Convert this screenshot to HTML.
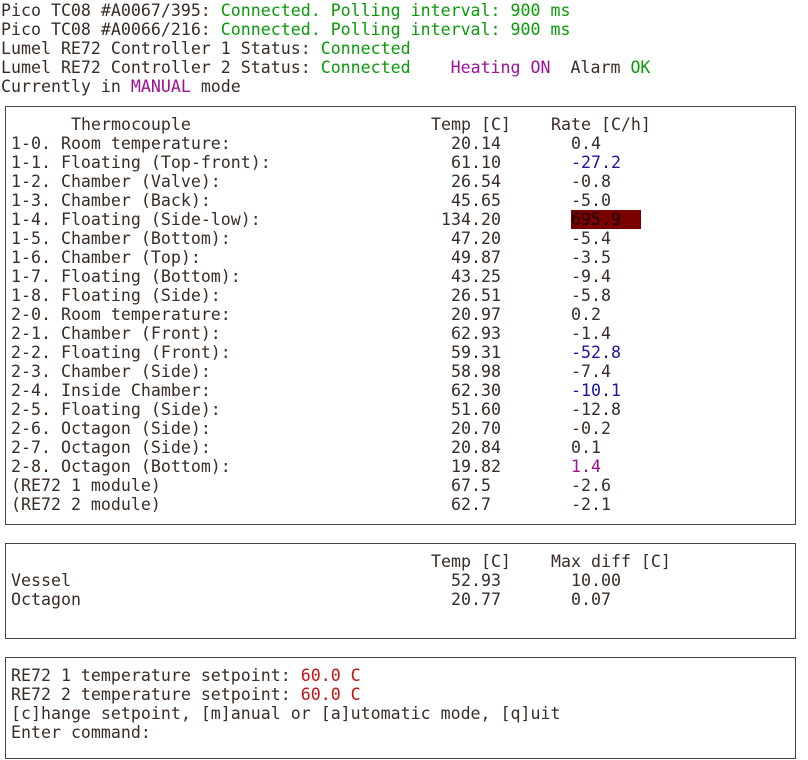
<!DOCTYPE html>
<html><head><meta charset="utf-8"><style>
html,body{margin:0;padding:0;background:#fff;width:808px;height:760px;overflow:hidden}
body{position:relative;font-family:"DejaVu Sans Mono","Liberation Mono",monospace;font-size:16.6px;color:#3a2c26}
.l{position:absolute;left:0;height:19px;line-height:19px;white-space:pre;margin-top:1px}
.l span{position:absolute;white-space:pre}
.a{left:11px}.t{left:431px;width:70px;text-align:right}.r{left:571px}
.g{color:#0a9a0a}.m{color:#a0109a}.b{color:#1a14a0}.red{color:#c81010}
.box{position:absolute;left:5px;width:789px;border:1px solid #444}
.hl{background:#7a0000;color:#1a0000;padding-right:20px}
</style></head><body>
<div class="l" style="top:0;left:1px">Pico TC08 #A0067/395: <span style="position:static" class="g">Connected. Polling interval: 900 ms</span></div>
<div class="l" style="top:19px;left:1px">Pico TC08 #A0066/216: <span style="position:static" class="g">Connected. Polling interval: 900 ms</span></div>
<div class="l" style="top:38px;left:1px">Lumel RE72 Controller 1 Status: <span style="position:static" class="g">Connected</span></div>
<div class="l" style="top:57px;left:1px">Lumel RE72 Controller 2 Status: <span style="position:static" class="g">Connected</span>    <span style="position:static" class="m">Heating ON</span>  Alarm <span style="position:static" class="g">OK</span></div>
<div class="l" style="top:76px;left:1px">Currently in <span style="position:static" class="m">MANUAL</span> mode</div>

<div class="box" style="top:106px;height:417px"></div>
<div class="box" style="top:543px;height:94px"></div>
<div class="box" style="top:657px;height:100px"></div>

<div class="l" style="top:114px"><span style="left:71px">Thermocouple</span><span style="left:431px">Temp [C]</span><span style="left:551px">Rate [C/h]</span></div>
<div class="l" style="top:133px"><span class="a">1-0. Room temperature:</span><span class="t">20.14</span><span class="r">0.4</span></div>
<div class="l" style="top:152px"><span class="a">1-1. Floating (Top-front):</span><span class="t">61.10</span><span class="r b">-27.2</span></div>
<div class="l" style="top:171px"><span class="a">1-2. Chamber (Valve):</span><span class="t">26.54</span><span class="r">-0.8</span></div>
<div class="l" style="top:190px"><span class="a">1-3. Chamber (Back):</span><span class="t">45.65</span><span class="r">-5.0</span></div>
<div class="l" style="top:209px"><span class="a">1-4. Floating (Side-low):</span><span class="t">134.20</span><span class="r hl">695.9</span></div>
<div class="l" style="top:228px"><span class="a">1-5. Chamber (Bottom):</span><span class="t">47.20</span><span class="r">-5.4</span></div>
<div class="l" style="top:247px"><span class="a">1-6. Chamber (Top):</span><span class="t">49.87</span><span class="r">-3.5</span></div>
<div class="l" style="top:266px"><span class="a">1-7. Floating (Bottom):</span><span class="t">43.25</span><span class="r">-9.4</span></div>
<div class="l" style="top:285px"><span class="a">1-8. Floating (Side):</span><span class="t">26.51</span><span class="r">-5.8</span></div>
<div class="l" style="top:304px"><span class="a">2-0. Room temperature:</span><span class="t">20.97</span><span class="r">0.2</span></div>
<div class="l" style="top:323px"><span class="a">2-1. Chamber (Front):</span><span class="t">62.93</span><span class="r">-1.4</span></div>
<div class="l" style="top:342px"><span class="a">2-2. Floating (Front):</span><span class="t">59.31</span><span class="r b">-52.8</span></div>
<div class="l" style="top:361px"><span class="a">2-3. Chamber (Side):</span><span class="t">58.98</span><span class="r">-7.4</span></div>
<div class="l" style="top:380px"><span class="a">2-4. Inside Chamber:</span><span class="t">62.30</span><span class="r b">-10.1</span></div>
<div class="l" style="top:399px"><span class="a">2-5. Floating (Side):</span><span class="t">51.60</span><span class="r">-12.8</span></div>
<div class="l" style="top:418px"><span class="a">2-6. Octagon (Side):</span><span class="t">20.70</span><span class="r">-0.2</span></div>
<div class="l" style="top:437px"><span class="a">2-7. Octagon (Side):</span><span class="t">20.84</span><span class="r">0.1</span></div>
<div class="l" style="top:456px"><span class="a">2-8. Octagon (Bottom):</span><span class="t">19.82</span><span class="r m">1.4</span></div>
<div class="l" style="top:475px"><span class="a">(RE72 1 module)</span><span style="left:451px">67.5</span><span class="r">-2.6</span></div>
<div class="l" style="top:494px"><span class="a">(RE72 2 module)</span><span style="left:451px">62.7</span><span class="r">-2.1</span></div>

<div class="l" style="top:551px"><span style="left:431px">Temp [C]</span><span style="left:551px">Max diff [C]</span></div>
<div class="l" style="top:570px"><span class="a">Vessel</span><span class="t">52.93</span><span class="r">10.00</span></div>
<div class="l" style="top:589px"><span class="a">Octagon</span><span class="t">20.77</span><span class="r">0.07</span></div>

<div class="l" style="top:665px;left:11px">RE72 1 temperature setpoint: <span style="position:static" class="red">60.0 C</span></div>
<div class="l" style="top:684px;left:11px">RE72 2 temperature setpoint: <span style="position:static" class="red">60.0 C</span></div>
<div class="l" style="top:703px;left:11px">[c]hange setpoint, [m]anual or [a]utomatic mode, [q]uit</div>
<div class="l" style="top:722px;left:11px">Enter command:</div>
</body></html>
